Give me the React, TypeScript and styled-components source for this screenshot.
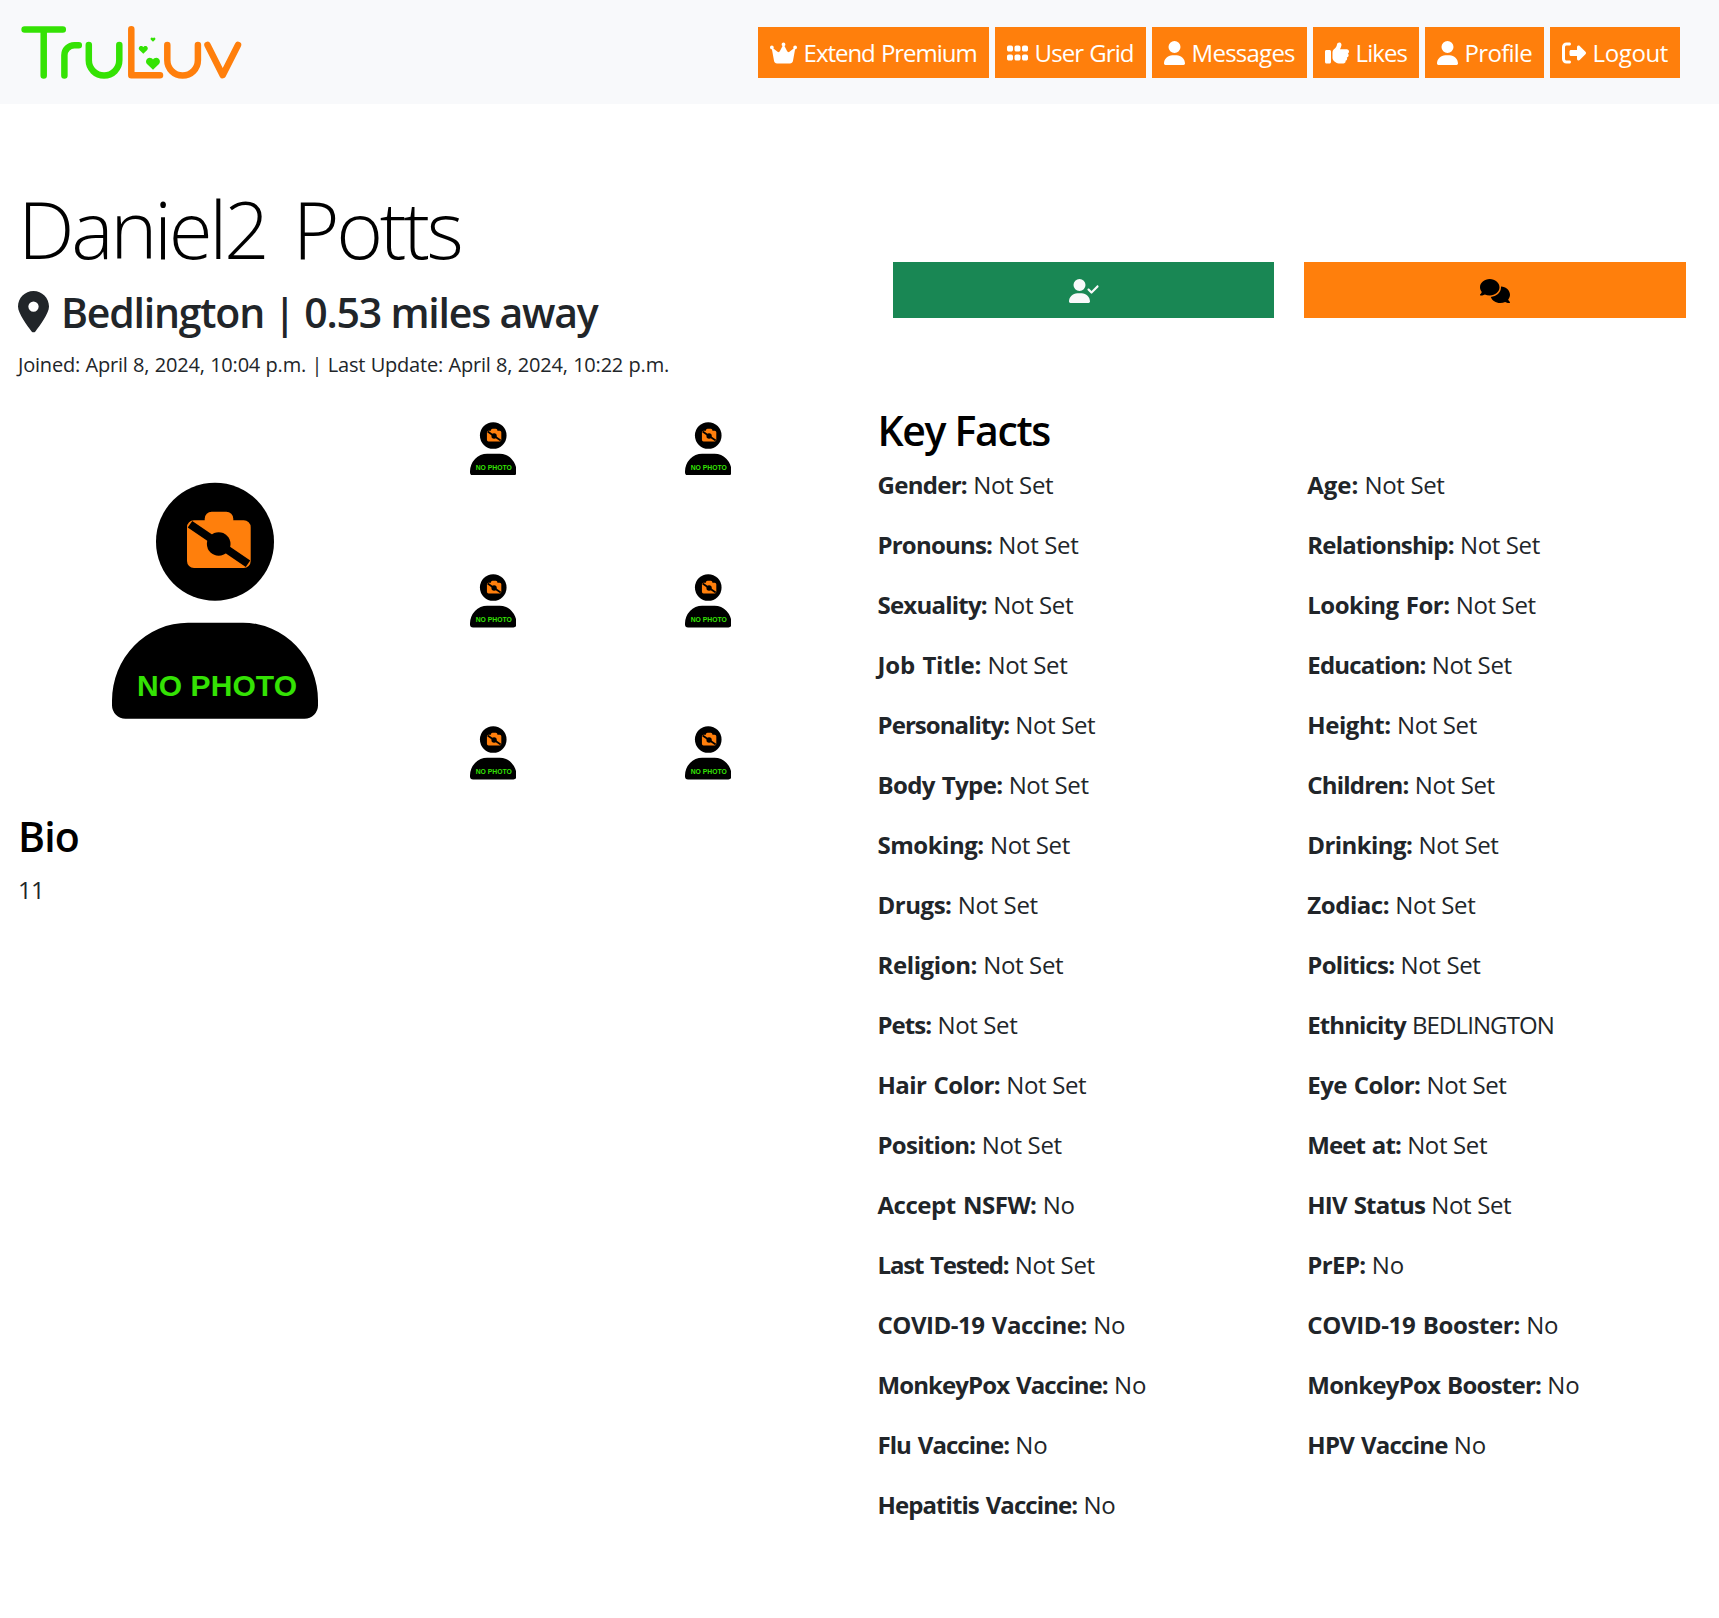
import React, { useLayoutEffect, useRef, useState } from "react";
import styled, { createGlobalStyle } from "styled-components";
import {
  FaComments,
  FaCrown,
  FaGrip,
  FaLocationDot,
  FaRightFromBracket,
  FaThumbsUp,
  FaUser,
  FaUserCheck,
} from "react-icons/fa6";
import type { IconType } from "react-icons";

const ORANGE = "#ff7f0c";
const GREEN = "#34e204";
const INK = "#212529";

const GlobalStyle = createGlobalStyle`
  *, *::before, *::after { box-sizing: border-box; }
  body {
    margin: 0;
    background: #fff;
    color: ${INK};
    font-family: "Segoe UI", "Open Sans", "Noto Sans", sans-serif;
    font-size: 24px;
    line-height: 36px;
    font-stretch: 94%;
  }
  h1, h2, p { margin: 0; }
`;

const Tracked = styled.span<{ $tracking: number }>`
  white-space: pre;
  letter-spacing: ${(p) => p.$tracking}px;
`;

/* Sets a run of text to a given measure by adjusting its tracking. */
function Fit({ width, children }: { width: number; children: string }) {
  const ref = useRef<HTMLSpanElement>(null);
  const [tracking, setTracking] = useState(0);
  useLayoutEffect(() => {
    const natural = ref.current!.getBoundingClientRect().width - tracking * children.length;
    const next = Math.round(((width - natural) / children.length) * 1000) / 1000;
    if (Math.abs(next - tracking) > 0.004) setTracking(next);
  }, [width, children, tracking]);
  return (
    <Tracked ref={ref} $tracking={tracking}>
      {children}
    </Tracked>
  );
}

const Header = styled.header`
  display: flex;
  align-items: flex-start;
  justify-content: space-between;
  height: 104px;
  padding: 22px 39px 0 20px;
  background: #f8f9fb;
`;

const Logo = styled.svg`
  display: block;
  width: 224px;
  height: 60px;
`;

const Nav = styled.nav`
  display: flex;
  gap: 6px;
  padding-top: 5px;
`;

const NavLink = styled.a<{ $width: number }>`
  display: flex;
  align-items: center;
  gap: 6.6px;
  width: ${(p) => p.$width}px;
  height: 51px;
  padding: 1px 0 0 12px;
  background: ${ORANGE};
  color: #fff;
  word-spacing: 1px;
`;

const Glyph = styled.span<{ $width: number; $size?: number }>`
  display: flex;
  flex: none;
  width: ${(p) => p.$width}px;
  height: ${(p) => p.$size ?? 24}px;
  svg { width: 100%; height: 100%; }
`;

const Columns = styled.div`
  display: grid;
  grid-template-columns: 1fr 1fr;
`;

const Identity = styled.section`
  height: 301px;
  padding: 76px 0 0 18px;
`;

const Name = styled.h1`
  color: #000;
  font-size: 80px;
  font-weight: 300;
  line-height: 96px;
  word-spacing: 9px;
`;

const Place = styled.h2`
  display: flex;
  align-items: center;
  gap: 12px;
  margin-top: 11px;
  font-size: 41px;
  font-weight: 600;
  line-height: 50px;
`;

const Dates = styled.p`
  margin-top: 13px;
  font-size: 20px;
  line-height: 30px;
  word-spacing: 0.5px;
`;

const Actions = styled.section`
  display: grid;
  grid-template-columns: 381px 382px;
  column-gap: 30px;
  align-items: start;
  padding: 158px 0 0 33.5px;
`;

const Action = styled.button<{ $bg: string; $ink: string }>`
  display: flex;
  align-items: center;
  justify-content: center;
  height: 56px;
  padding: 2px 0 0;
  border: 0;
  background: ${(p) => p.$bg};
  color: ${(p) => p.$ink};
`;

const Gallery = styled.div`
  display: grid;
  grid-template-columns: 430px 430px;
  height: 406px;
`;

const Portrait = styled.div`
  display: flex;
  justify-content: center;
  padding-top: 77px;
`;

const Thumbs = styled.div`
  display: grid;
  grid-template-columns: 215px 215px;
  grid-auto-rows: 152.2px;
  align-content: start;
  padding-top: 17px;
`;

const Thumb = styled.div`
  display: flex;
  justify-content: center;
  padding-right: 89.5px;
`;

const Picture = styled.svg<{ $width: number }>`
  display: block;
  width: ${(p) => p.$width}px;
  height: ${(p) => (p.$width * 237) / 206}px;
`;

const SectionTitle = styled.h2`
  color: #000;
  font-size: 41px;
  font-weight: 600;
  line-height: 50px;
`;

const Bio = styled.section`
  padding-left: 18px;
`;

const BioText = styled.p`
  margin-top: 11px;
`;

const Facts = styled.section`
  padding-left: 17.5px;
`;

const FactGrid = styled.div`
  display: grid;
  grid-template-columns: 429.8px 1fr;
  row-gap: 24px;
  margin-top: 12px;
`;

const Fact = styled.p`
  white-space: pre;
  strong {
    font-weight: 700;
    word-spacing: 1.5px;
  }
`;

function Heart({ x, y, s }: { x: number; y: number; s: number }) {
  return (
    <path
      transform={`translate(${x} ${y}) scale(${s})`}
      fill={GREEN}
      d="M0 6L-6 0.3C-8.4-2.7-5.8-6-3.4-6C-1.8-6-0.6-5.2 0-4.2C0.6-5.2 1.800-6 3.400-6C5.800-6 8.400-2.700 6 0.300Z"
    />
  );
}

function Brand() {
  return (
    <Logo viewBox="20 22 224 60" role="img" aria-label="TruLuv">
      <g fill="none" strokeWidth="6.500" strokeLinecap="round" strokeLinejoin="round">
        <g stroke={GREEN}>
          <path d="M24.600 29.500H62.800M43.700 29.500V75.600" />
          <path d="M64.400 75.600V55.200A10 10 0 0 1 74.400 45.200H78.800" />
          <path d="M88.800 45V60.300A15.250 15.250 0 0 0 119.300 60.300V45" />
        </g>
        <g stroke={ORANGE}>
          <path d="M131.300 29.200V75.300H160" />
          <path d="M167.300 45V60.300A15.300 15.300 0 0 0 197.900 60.300V45" />
          <path d="M207.500 45L222.700 75.200L238 45" />
        </g>
      </g>
      <Heart x={153} y={39.6} s={0.35} />
      <Heart x={143.3} y={49.8} s={0.65} />
      <Heart x={153} y={63.7} s={1} />
    </Logo>
  );
}

function NoPhoto({ width }: { width: number }) {
  return (
    <Picture $width={width} viewBox="0 0 206 237">
      <circle cx="103" cy="59.700" r="59" />
      <path d="M76 140.700H131A75 78 0 0 1 206 219V223A13.500 13.500 0 0 1 192.500 236.700H13.500A13.500 13.500 0 0 1 0 223V219A76 78 0 0 1 76 140.700Z" />
      <path
        fill={ORANGE}
        d="M82 38.300H92.700V36.700A7 7 0 0 1 99.700 29.700H114.300A7 7 0 0 1 121.300 36.700V38.300H131.700A7 7 0 0 1 138.700 45.300V79A7 7 0 0 1 131.700 86H82A7 7 0 0 1 75 79V45.300A7 7 0 0 1 82 38.300Z"
      />
      <circle cx="106.700" cy="62" r="11.800" />
      <path d="M78 42.300L136 81.700" stroke="#000" strokeWidth="8" />
      <text
        x="25"
        y="214.200"
        fill={GREEN}
        fontFamily="Liberation Sans, Arial, sans-serif"
        fontSize="30"
        fontWeight="700"
        textLength="160"
      >
        NO PHOTO
      </text>
    </Picture>
  );
}

/* label, button width, icon, icon width, label width */
const links: [string, number, IconType, number, number][] = [
  ["Extend Premium", 231, FaCrown, 27, 173],
  ["User Grid", 151, FaGrip, 21, 99],
  ["Messages", 155, FaUser, 21, 103.2],
  ["Likes", 106, FaThumbsUp, 24, 51.4],
  ["Profile", 119, FaUser, 21, 67.4],
  ["Logout", 130, FaRightFromBracket, 24, 75.4],
];

const valueWidths: Record<string, number> = { "Not Set": 80, No: 32.1, BEDLINGTON: 142 };

const facts: [string, number, string][] = [
  ["Gender:", 89.5, "Not Set"],
  ["Age:", 51, "Not Set"],
  ["Pronouns:", 114.6, "Not Set"],
  ["Relationship:", 146.4, "Not Set"],
  ["Sexuality:", 109.4, "Not Set"],
  ["Looking For:", 142.2, "Not Set"],
  ["Job Title:", 103.7, "Not Set"],
  ["Education:", 118.2, "Not Set"],
  ["Personality:", 131.6, "Not Set"],
  ["Height:", 83.4, "Not Set"],
  ["Body Type:", 124.9, "Not Set"],
  ["Children:", 101.3, "Not Set"],
  ["Smoking:", 106.2, "Not Set"],
  ["Drinking:", 105, "Not Set"],
  ["Drugs:", 74, "Not Set"],
  ["Zodiac:", 81.8, "Not Set"],
  ["Religion:", 99.5, "Not Set"],
  ["Politics:", 87, "Not Set"],
  ["Pets:", 53.7, "Not Set"],
  ["Ethnicity", 98.4, "BEDLINGTON"],
  ["Hair Color:", 122.6, "Not Set"],
  ["Eye Color:", 113, "Not Set"],
  ["Position:", 98, "Not Set"],
  ["Meet at:", 93.6, "Not Set"],
  ["Accept NSFW:", 159, "No"],
  ["HIV Status", 117.8, "Not Set"],
  ["Last Tested:", 131, "Not Set"],
  ["PrEP:", 58.3, "No"],
  ["COVID-19 Vaccine:", 209.4, "No"],
  ["COVID-19 Booster:", 212.6, "No"],
  ["MonkeyPox Vaccine:", 230.3, "No"],
  ["MonkeyPox Booster:", 233.8, "No"],
  ["Flu Vaccine:", 131.6, "No"],
  ["HPV Vaccine", 140.3, "No"],
  ["Hepatitis Vaccine:", 199.7, "No"],
];

export default function App() {
  return (
    <>
      <GlobalStyle />
      <Header>
        <Brand />
        <Nav>
          {links.map(([label, width, Icon, iconWidth, labelWidth]) => (
            <NavLink key={label} $width={width}>
              <Glyph $width={iconWidth}>
                <Icon />
              </Glyph>
              <Fit width={labelWidth}>{label}</Fit>
            </NavLink>
          ))}
        </Nav>
      </Header>
      <Columns>
        <Identity>
          <Name>
            <Fit width={442.5}>Daniel2 Potts</Fit>
          </Name>
          <Place>
            <Glyph $width={31} $size={41.5}>
              <FaLocationDot />
            </Glyph>
            <Fit width={536.5}>Bedlington | 0.53 miles away</Fit>
          </Place>
          <Dates>
            <Fit width={651}>Joined: April 8, 2024, 10:04 p.m. | Last Update: April 8, 2024, 10:22 p.m.</Fit>
          </Dates>
        </Identity>
        <Actions>
          <Action $bg="#198754" $ink="#f8f9fa" aria-label="Liked">
            <Glyph $width={30}>
              <FaUserCheck />
            </Glyph>
          </Action>
          <Action $bg={ORANGE} $ink="#000" aria-label="Chat">
            <Glyph $width={30}>
              <FaComments />
            </Glyph>
          </Action>
        </Actions>
      </Columns>
      <Columns>
        <div>
          <Gallery>
            <Portrait>
              <NoPhoto width={206} />
            </Portrait>
            <Thumbs>
              {Array.from({ length: 6 }, (_, i) => (
                <Thumb key={i}>
                  <NoPhoto width={46.5} />
                </Thumb>
              ))}
            </Thumbs>
          </Gallery>
          <Bio>
            <SectionTitle>
              <Fit width={61}>Bio</Fit>
            </SectionTitle>
            <BioText>
              <Fit width={26}>11</Fit>
            </BioText>
          </Bio>
        </div>
        <Facts>
          <SectionTitle>
            <Fit width={172.5}>Key Facts</Fit>
          </SectionTitle>
          <FactGrid>
            {facts.map(([label, width, value]) => (
              <Fact key={label}>
                <strong>
                  <Fit width={width}>{label}</Fit>
                </strong>{" "}
                <Fit width={valueWidths[value]}>{value}</Fit>
              </Fact>
            ))}
          </FactGrid>
        </Facts>
      </Columns>
    </>
  );
}
